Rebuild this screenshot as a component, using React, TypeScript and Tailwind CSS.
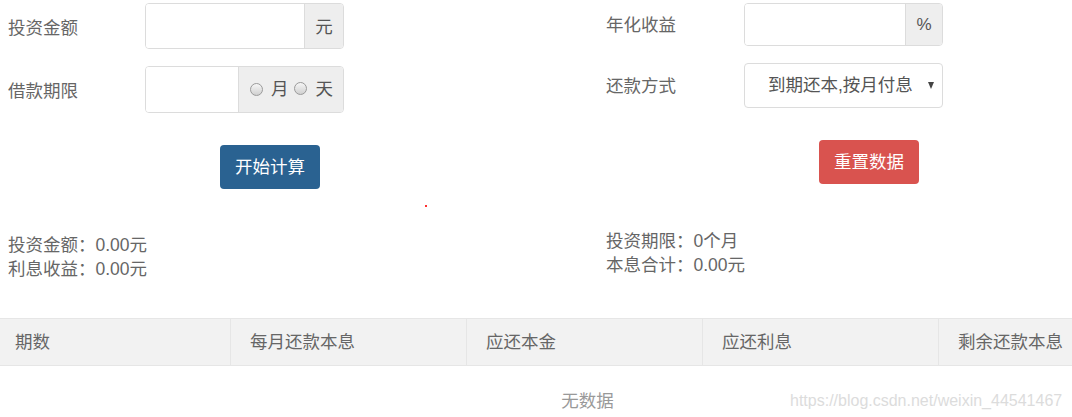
import React from "react";

const font = { fontFamily: '"Liberation Sans", "Noto Sans CJK SC", sans-serif' };

function Radio() {
  return (
    <span className="inline-block shrink-0 w-[13px] h-[13px] rounded-full border border-[#9a9a9a] bg-gradient-to-b from-[#f6f6f6] to-[#d0d0d0]" />
  );
}

export default function App() {
  return (
    <div
      className="relative w-[1072px] h-[417px] overflow-hidden bg-white text-[17.5px] text-[#666]"
      style={font}
    >
      <div className="flex">
        {/* left column */}
        <div className="w-[598px] relative">
          <div className="mt-[3px] flex items-center h-[46px]">
            <div className="w-[145px] pl-[8px] leading-[24px] pt-[4px]">投资金额</div>
            <div className="w-[199px] h-[46px] flex border border-[#dcdcdc] rounded-[4px] overflow-hidden">
              <div className="flex-1 bg-white" />
              <div className="w-[39px] bg-[#eeeeee] border-l border-[#dcdcdc] flex items-center justify-center text-[#555] pt-[2px]">元</div>
            </div>
          </div>
          <div className="mt-[17px] flex items-center h-[47px]">
            <div className="w-[145px] pl-[8px] leading-[24px] pt-[2px]">借款期限</div>
            <div className="w-[199px] h-[47px] flex border border-[#dcdcdc] rounded-[4px] overflow-hidden">
              <div className="w-[92px] bg-white" />
              <div className="flex-1 bg-[#eeeeee] border-l border-[#dcdcdc] flex items-center pl-[11px] text-[#555]">
                <Radio />
                <span className="ml-[8px]">月</span>
                <span className="ml-[5px]"><Radio /></span>
                <span className="ml-[9px]">天</span>
              </div>
            </div>
          </div>
          <div className="mt-[32px] ml-[220px] w-[100px] h-[44px] rounded-[4px] bg-[#2a6291] text-white flex items-center justify-center">
            开始计算
          </div>
          <span className="absolute left-[425px] top-[205px] w-[2px] h-[2px] bg-[#ff3030]" />
          <div className="mt-[44px] pl-[8px] leading-[24px]">
            <div>投资金额：0.00元</div>
            <div>利息收益：0.00元</div>
          </div>
        </div>
        {/* right column */}
        <div className="flex-1">
          <div className="mt-[3px] flex items-center h-[43px]">
            <div className="w-[146px] pl-[8px] leading-[24px]">年化收益</div>
            <div className="w-[199px] h-[43px] flex border border-[#dcdcdc] rounded-[4px] overflow-hidden">
              <div className="flex-1 bg-white" />
              <div className="w-[37px] bg-[#eeeeee] border-l border-[#dcdcdc] flex items-center justify-center text-[#555] text-[17px]">%</div>
            </div>
          </div>
          <div className="mt-[17px] flex items-center h-[45px]">
            <div className="w-[146px] pl-[8px] leading-[24px]">还款方式</div>
            <div className="w-[199px] h-[45px] flex items-center border border-[#dcdcdc] rounded-[4px] bg-white text-[#555] relative">
              <span className="pl-[23px]">到期还本,按月付息</span>
              <span className="absolute right-[8px] top-[18px] w-0 h-0 border-l-[3.5px] border-r-[3.5px] border-t-[7px] border-l-transparent border-r-transparent border-t-[#444]" />
            </div>
          </div>
          <div className="mt-[32px] ml-[221px] w-[100px] h-[44px] rounded-[4px] bg-[#d9534f] text-white flex items-center justify-center">
            重置数据
          </div>
          <div className="mt-[45px] pl-[8px] leading-[24px]">
            <div>投资期限：0个月</div>
            <div>本息合计：0.00元</div>
          </div>
        </div>
      </div>

      {/* table */}
      <div className="mt-[37px] w-[1175px]">
        <div className="flex h-[48px] bg-[#f2f2f2] border-t border-b border-[#e6e6e6] items-center">
          <div className="w-[231px] h-full flex items-center pl-[15px] border-r border-[#e6e6e6]">期数</div>
          <div className="w-[236px] h-full flex items-center pl-[19px] border-r border-[#e6e6e6]">每月还款本息</div>
          <div className="w-[236px] h-full flex items-center pl-[19px] border-r border-[#e6e6e6]">应还本金</div>
          <div className="w-[236px] h-full flex items-center pl-[19px] border-r border-[#e6e6e6]">应还利息</div>
          <div className="w-[236px] h-full flex items-center pl-[19px]">剩余还款本息</div>
        </div>
        <div className="h-[70px] flex items-center justify-center text-[#999]">无数据</div>
      </div>

      <div className="absolute left-[790px] top-[390px] text-[16px] text-[#dcdcdc] leading-[22px]">
        https://blog.csdn.net/weixin_44541467
      </div>
    </div>
  );
}
